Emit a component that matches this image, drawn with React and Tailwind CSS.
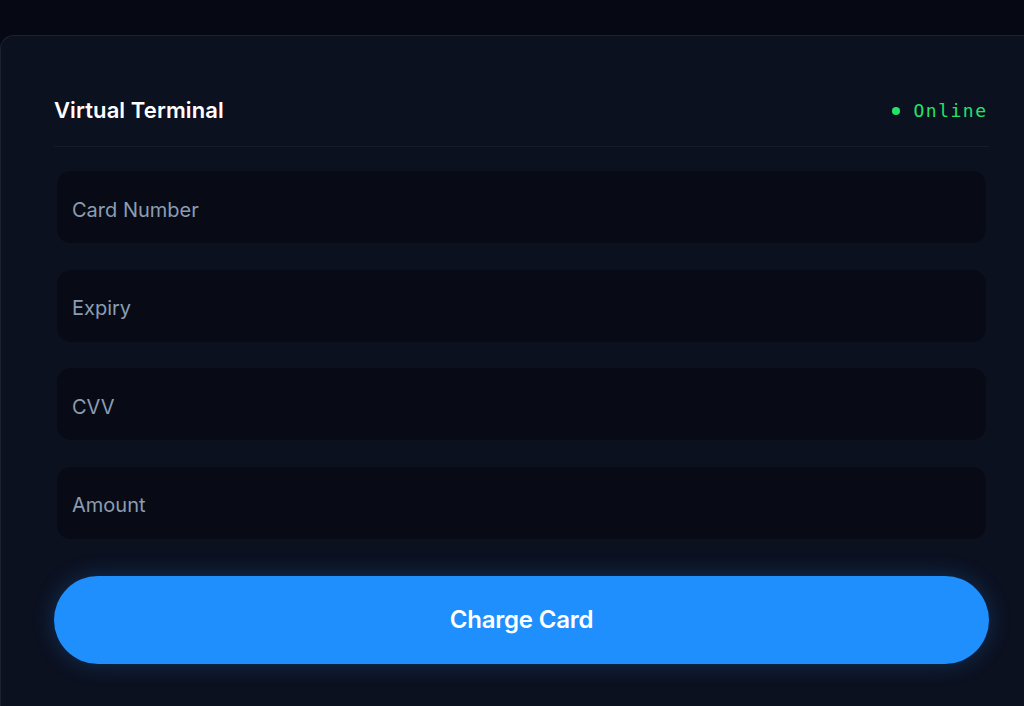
import { useState } from 'react'

const fields = ['Card Number', 'Expiry', 'CVV', 'Amount']

export default function App() {
  const [values, setValues] = useState({})

  return (
    <div className="min-h-[706px] bg-[#060913] pt-[35px] overflow-hidden" style={{ fontFamily: 'Inter, "Noto Sans", sans-serif' }}>
      <div className="min-h-[671px] w-[1060px] rounded-tl-[14px] border-t border-l border-[#1b2233] bg-[#0c1120] pl-[53px] pr-[71px] pt-[58px]">
        {/* Header */}
        <div className="flex items-center justify-between pr-[3px]">
          <h1 className="text-[22px] font-semibold tracking-[0.1px] text-white">Virtual Terminal</h1>
          <div className="flex items-center gap-[13px] text-[18px] tracking-[1.5px] text-[#22e46a]" style={{ fontFamily: '"DejaVu Sans Mono", monospace' }}>
            <span className="h-[8px] w-[8px] rounded-full bg-[#22e46a]" />
            <span className="-mr-[1.5px]">Online</span>
          </div>
        </div>
        <div className="mt-[19px] h-px bg-[#141b2b]" />

        {/* Fields */}
        <div className="mt-[24px] flex flex-col gap-[26.5px] pl-[3px] pr-[3px]">
          {fields.map(f => (
            <input
              key={f}
              placeholder={f}
              value={values[f] || ''}
              onChange={e => setValues({ ...values, [f]: e.target.value })}
              className="h-[72px] w-full rounded-[14px] bg-[#080b16] px-[15px] pt-[5px] text-[20px] text-[#c8d4e2] placeholder-[#8b9db3] outline-none"
            />
          ))}
        </div>

        <button className="mt-[37px] h-[88px] w-full rounded-full bg-[#1e8ffd] text-[24px] font-semibold tracking-[-0.2px] text-white shadow-[0_0_22px_rgba(30,143,253,0.25)]">
          Charge Card
        </button>
      </div>
    </div>
  )
}
